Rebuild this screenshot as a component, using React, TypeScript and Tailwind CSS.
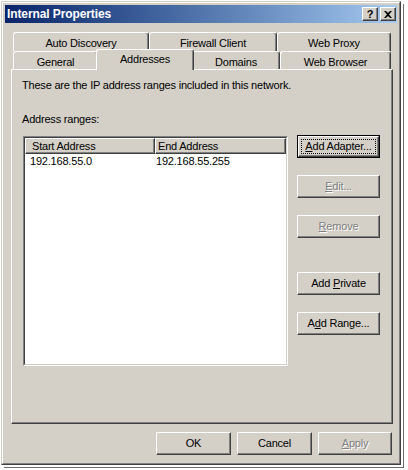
import React from "react";

const face = "bg-[#d4d0c8]";
const raised =
  "border border-t-white border-l-white border-r-[#404040] border-b-[#404040] shadow-[inset_-1px_-1px_0_#808080]";
const disabledText = "text-[#808080] [text-shadow:1px_1px_0_#ffffff]";

function U({ children }: { children: React.ReactNode }) {
  return <span className="underline underline-offset-[1px]">{children}</span>;
}

function Button({
  children,
  w = "w-[83px]",
  disabled,
  isDefault,
}: {
  children: React.ReactNode;
  w?: string;
  disabled?: boolean;
  isDefault?: boolean;
}) {
  if (isDefault) {
    return (
      <div className={`h-[23px] ${w} border border-black ${face}`}>
        <div className={`h-full w-full p-[2px] ${raised}`}>
          <div className="flex h-full w-full items-center justify-center border border-dotted border-black">
            <span>{children}</span>
          </div>
        </div>
      </div>
    );
  }
  return (
    <div
      className={`flex h-[23px] ${w} items-center justify-center ${raised} ${face} ${
        disabled ? disabledText : "text-black"
      }`}
    >
      <span>{children}</span>
    </div>
  );
}

function Tab({ label, w, selected }: { label: string; w: string; selected?: boolean }) {
  const base =
    "border-t border-l border-white border-r border-r-[#404040] shadow-[inset_-1px_0_0_#808080] rounded-t-[3px] text-center bg-[#d4d0c8]";
  if (selected) {
    return (
      <div className={`relative z-10 -mx-[2px] -mt-[2px] h-[21px] ${w} ${base} pt-[1px]`}>{label}</div>
    );
  }
  return <div className={`h-full ${w} ${base} pt-[2px]`}>{label}</div>;
}

export default function App() {
  return (
    <div
      className="h-[470px] w-[408px] bg-white pl-px pt-px text-[11px] tracking-[-0.2px] text-black"
      style={{ fontFamily: '"Liberation Sans", Arial, sans-serif' }}
    >
      <div className="h-[464px] w-[400px] border border-t-[#d4d0c8] border-l-[#d4d0c8] border-r-[#404040] border-b-[#404040] shadow-[2px_2px_0_#ffffff,3px_3px_0_#707070]">
        <div className={`flex h-full flex-col border border-white border-r-[#808080] border-b-[#808080] p-[2px] ${face}`}>
          {/* title bar */}
          <div className="flex h-[18px] items-center bg-gradient-to-r from-[#0a246a] to-[#a6caf0] pl-[2px] pr-[1px]">
            <span className="flex-1 text-[12px] font-bold tracking-[-0.1px] text-white">Internal Properties</span>
            <div className={`flex h-[14px] w-[16px] items-center justify-center ${raised} ${face}`}>
              <span className="text-[11px] font-bold leading-none">?</span>
            </div>
            <div className={`ml-[2px] flex h-[14px] w-[16px] items-center justify-center ${raised} ${face}`}>
              <svg width="8" height="7" viewBox="0 0 8 7">
                <path d="M0 0h2l2 2 2-2h2L5 3.5 8 7H6L4 5 2 7H0l3-3.5z" fill="#000" />
              </svg>
            </div>
          </div>

          {/* tabs + panel */}
          <div className="ml-[6px] mr-[4px] mt-[9px]">
            <div className="flex h-[19px] pl-[2px]">
              <Tab label="Auto Discovery" w="w-[136px]" />
              <Tab label="Firewall Client" w="w-[128px]" />
              <Tab label="Web Proxy" w="w-[114px]" />
            </div>
            <div className="flex h-[18px] items-start pl-[2px]">
              <Tab label="General" w="w-[85px]" />
              <Tab label="Addresses" w="w-[98px]" selected />
              <Tab label="Domains" w="w-[88px]" />
              <Tab label="Web Browser" w="w-[111px]" />
            </div>
            <div className="h-[355px] border border-t-white border-l-white border-r-[#404040] border-b-[#404040] shadow-[inset_-1px_-1px_0_#808080] pl-[10px] pt-[9px]">
              <div className="leading-[13px]">These are the IP address ranges included in this network.</div>
              <div className="mt-[21px] leading-[13px]">Address ranges:</div>
              <div className="mt-[10px] flex items-start">
                <div className="ml-px h-[230px] w-[265px] border border-t-[#808080] border-l-[#808080] border-r-white border-b-white">
                  <div className="h-full w-full border border-t-[#404040] border-l-[#404040] border-r-[#d4d0c8] border-b-[#d4d0c8] bg-white">
                    <div className="flex h-[16px]">
                      <div className={`flex w-[130px] items-center pl-[6px] ${raised} ${face}`}>Start Address</div>
                      <div className={`flex w-[131px] items-center pl-[2px] ${raised} ${face}`}>End Address</div>
                    </div>
                    <div className="flex h-[14px] items-center">
                      <div className="w-[130px] pl-[5px]">192.168.55.0</div>
                      <div className="pl-px">192.168.55.255</div>
                    </div>
                  </div>
                </div>
                <div className="-mt-px ml-[9px] flex flex-col">
                  <Button isDefault>
                    <U>A</U>dd Adapter...
                  </Button>
                  <div className="mt-[17px]">
                    <Button disabled>
                      <U>E</U>dit...
                    </Button>
                  </div>
                  <div className="mt-[17px]">
                    <Button disabled>
                      <U>R</U>emove
                    </Button>
                  </div>
                  <div className="mt-[34px]">
                    <Button>
                      Add <U>P</U>rivate
                    </Button>
                  </div>
                  <div className="mt-[17px]">
                    <Button>
                      A<U>d</U>d Range...
                    </Button>
                  </div>
                </div>
              </div>
            </div>
          </div>

          {/* bottom buttons */}
          <div className="mr-[5px] mt-[8px] flex justify-end gap-[6px]">
            <Button w="w-[75px]">OK</Button>
            <Button w="w-[75px]">Cancel</Button>
            <Button w="w-[74px]" disabled>
              <U>A</U>pply
            </Button>
          </div>
        </div>
      </div>
    </div>
  );
}
